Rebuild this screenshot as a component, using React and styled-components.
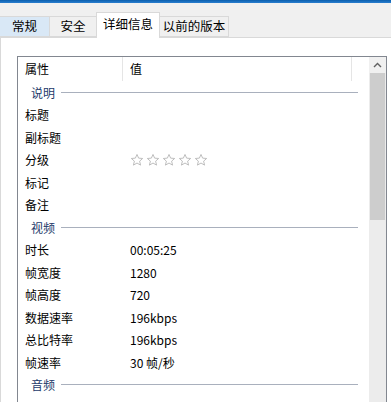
import styled, { createGlobalStyle } from "styled-components";

const GlobalStyle = createGlobalStyle`
  html, body {
    margin: 0;
    padding: 0;
    background: #f0f0f0;
  }
  body {
    font-family: "Noto Sans CJK SC", "Noto Sans", sans-serif;
    font-size: 12px;
    color: #000;
  }
`;

const Window = styled.div`
  width: 391px;
  height: 402px;
  display: flex;
  flex-direction: column;
  overflow: hidden;
  background: #f0f0f0;
`;

const TitleStrip = styled.div`
  height: 3px;
  background: linear-gradient(#0b5fae, #2a7fcf);
`;

const TabBar = styled.div`
  height: 34px;
  display: flex;
  align-items: flex-end;
  position: relative;
  z-index: 1;
`;

const Tab = styled.div`
  box-sizing: border-box;
  width: ${(p) => p.$w}px;
  height: ${(p) => (p.$active ? 26 : 21)}px;
  margin-bottom: ${(p) => (p.$active ? -1 : 0)}px;
  display: flex;
  align-items: center;
  justify-content: center;
  padding-bottom: ${(p) => (p.$active ? 3 : 0)}px;
  border: 1px solid #d9d9d9;
  border-bottom: ${(p) => (p.$active ? "none" : "1px solid #d9d9d9")};
  margin-left: -1px;
  background: ${(p) =>
    p.$active ? "#ffffff" : p.$hover ? "#d9e8f6" : "#f0f0f0"};
  color: #000;
  font-size: 12.5px;
  line-height: 1;
`;

const Panel = styled.div`
  flex: 1;
  min-height: 0;
  background: #ffffff;
  border-top: 1px solid #d9d9d9;
  border-left: 1px solid #d9d9d9;
  padding: 18px 4px 0 16px;
  display: flex;
`;

const ListBox = styled.div`
  flex: 1;
  border: 1px solid #828790;
  border-bottom: none;
  display: grid;
  grid-template-columns: 1fr 17px;
  min-height: 0;
`;

const Rows = styled.div`
  display: flex;
  flex-direction: column;
`;

const HeaderRow = styled.div`
  height: 24px;
  display: grid;
  grid-template-columns: 105px 229px 1fr;
`;

const HeaderCell = styled.div`
  display: flex;
  align-items: center;
  padding: 0 0 2px 7px;
  border-right: ${(p) => (p.$divider ? "1px solid #e5e5e5" : "none")};
`;

const Row = styled.div`
  height: 22.5px;
  display: grid;
  grid-template-columns: 105px 1fr;
  align-items: center;
`;

const Label = styled.div`
  padding-left: 7px;
  white-space: nowrap;
`;

const Value = styled.div`
  padding-left: 7px;
  white-space: nowrap;
  display: flex;
  align-items: center;
`;

const GroupRow = styled.div`
  height: 22.5px;
  display: flex;
  align-items: center;
  padding-left: 13px;
  margin-right: 11px;
  gap: 6px;
  color: #23396a;
`;

const GroupLine = styled.div`
  flex: 1;
  height: 1px;
  background: #a9b0bd;
`;

const Stars = styled.div`
  display: flex;
  gap: 2px;
`;

const Scrollbar = styled.div`
  background: #ececec;
  display: flex;
  flex-direction: column;
`;

const ArrowButton = styled.div`
  height: 16px;
  display: flex;
  align-items: center;
  justify-content: center;
  background: #f0f0f0;
`;

const Thumb = styled.div`
  height: 147px;
  background: #cdcdcd;
  margin: 0 1px;
`;

function Star() {
  return (
    <svg width="14" height="14" viewBox="0 0 24 24">
      <path
        d="M12 2.5l2.8 6.3 6.9.6-5.2 4.6 1.6 6.8L12 17.2l-6.1 3.6 1.6-6.8-5.2-4.6 6.9-.6z"
        fill="none"
        stroke="#b5b5b5"
        strokeWidth="1.5"
        strokeLinejoin="round"
      />
    </svg>
  );
}

const groups = [
  {
    title: "说明",
    items: [
      ["标题", ""],
      ["副标题", ""],
      ["分级", "stars"],
      ["标记", ""],
      ["备注", ""],
    ],
  },
  {
    title: "视频",
    items: [
      ["时长", "00:05:25"],
      ["帧宽度", "1280"],
      ["帧高度", "720"],
      ["数据速率", "196kbps"],
      ["总比特率", "196kbps"],
      ["帧速率", "30 帧/秒"],
    ],
  },
  { title: "音频", items: [] },
];

const tabs = [
  { name: "常规", w: 51, hover: true },
  { name: "安全", w: 48 },
  { name: "详细信息", w: 64, active: true },
  { name: "以前的版本", w: 70 },
];

export default function App() {
  return (
    <>
      <GlobalStyle />
      <Window>
        <TitleStrip />
        <TabBar>
          {tabs.map((t) => (
            <Tab key={t.name} $w={t.w} $active={t.active} $hover={t.hover}>
              {t.name}
            </Tab>
          ))}
        </TabBar>
        <Panel>
          <ListBox>
            <Rows>
              <HeaderRow>
                <HeaderCell $divider>属性</HeaderCell>
                <HeaderCell $divider>值</HeaderCell>
                <HeaderCell />
              </HeaderRow>
              {groups.map((g) => (
                <div key={g.title}>
                  <GroupRow>
                    {g.title}
                    <GroupLine />
                  </GroupRow>
                  {g.items.map(([label, value]) => (
                    <Row key={label}>
                      <Label>{label}</Label>
                      <Value>
                        {value === "stars" ? (
                          <Stars>
                            {[0, 1, 2, 3, 4].map((i) => (
                              <Star key={i} />
                            ))}
                          </Stars>
                        ) : (
                          value
                        )}
                      </Value>
                    </Row>
                  ))}
                </div>
              ))}
            </Rows>
            <Scrollbar>
              <ArrowButton>
                <svg width="9" height="6" viewBox="0 0 9 6">
                  <path
                    d="M1 5l3.5-3.5L8 5"
                    fill="none"
                    stroke="#606060"
                    strokeWidth="1.4"
                  />
                </svg>
              </ArrowButton>
              <Thumb />
            </Scrollbar>
          </ListBox>
        </Panel>
      </Window>
    </>
  );
}
